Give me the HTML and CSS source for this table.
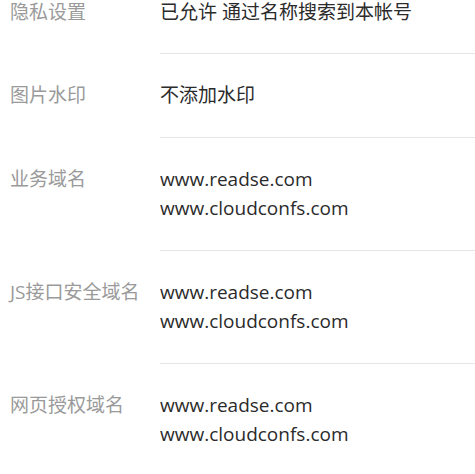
FILE: index.html
```html
<!DOCTYPE html>
<html lang="zh-CN">
<head>
    <meta charset="UTF-8">
    <meta name="viewport" content="width=device-width, initial-scale=1.0">
    <title>公众号设置</title>
    <link rel="stylesheet" href="styles.css">
</head>
<body>
    <div class="settings">
        <div class="row">
            <div class="label">隐私设置</div>
            <div class="value">已允许 通过名称搜索到本帐号</div>
        </div>
        <div class="row">
            <div class="label">图片水印</div>
            <div class="value">不添加水印</div>
        </div>
        <div class="row">
            <div class="label">业务域名</div>
            <div class="value">
                <div>www.readse.com</div>
                <div>www.cloudconfs.com</div>
            </div>
        </div>
        <div class="row">
            <div class="label">JS接口安全域名</div>
            <div class="value">
                <div>www.readse.com</div>
                <div>www.cloudconfs.com</div>
            </div>
        </div>
        <div class="row">
            <div class="label">网页授权域名</div>
            <div class="value">
                <div>www.readse.com</div>
                <div>www.cloudconfs.com</div>
            </div>
        </div>
    </div>
</body>
</html>
```

FILE: styles.css
```css
body {
    font-family: "Open Sans", "Noto Sans CJK SC", sans-serif;
    font-size: 19px;
    line-height: 29px;
    color: #333;
    margin: 0;
    background: #fff;
}
.row {
    display: flex;
}
.label {
    width: 150px;
    padding: 27px 0 0 10px;
    color: #9a9a9a;
    white-space: nowrap;
}
.value {
    flex: 1;
    padding: 27px 0 27px;
    border-bottom: 1px solid #e6e6e6;
    color: #2b2b2b;
}
/* first row is scrolled partly out of view */
.row:first-child .label,
.row:first-child .value {
    padding-top: 0;
    padding-bottom: 28px;
    line-height: 25px;
}
.row:last-child .value {
    border-bottom: none;
}
```
